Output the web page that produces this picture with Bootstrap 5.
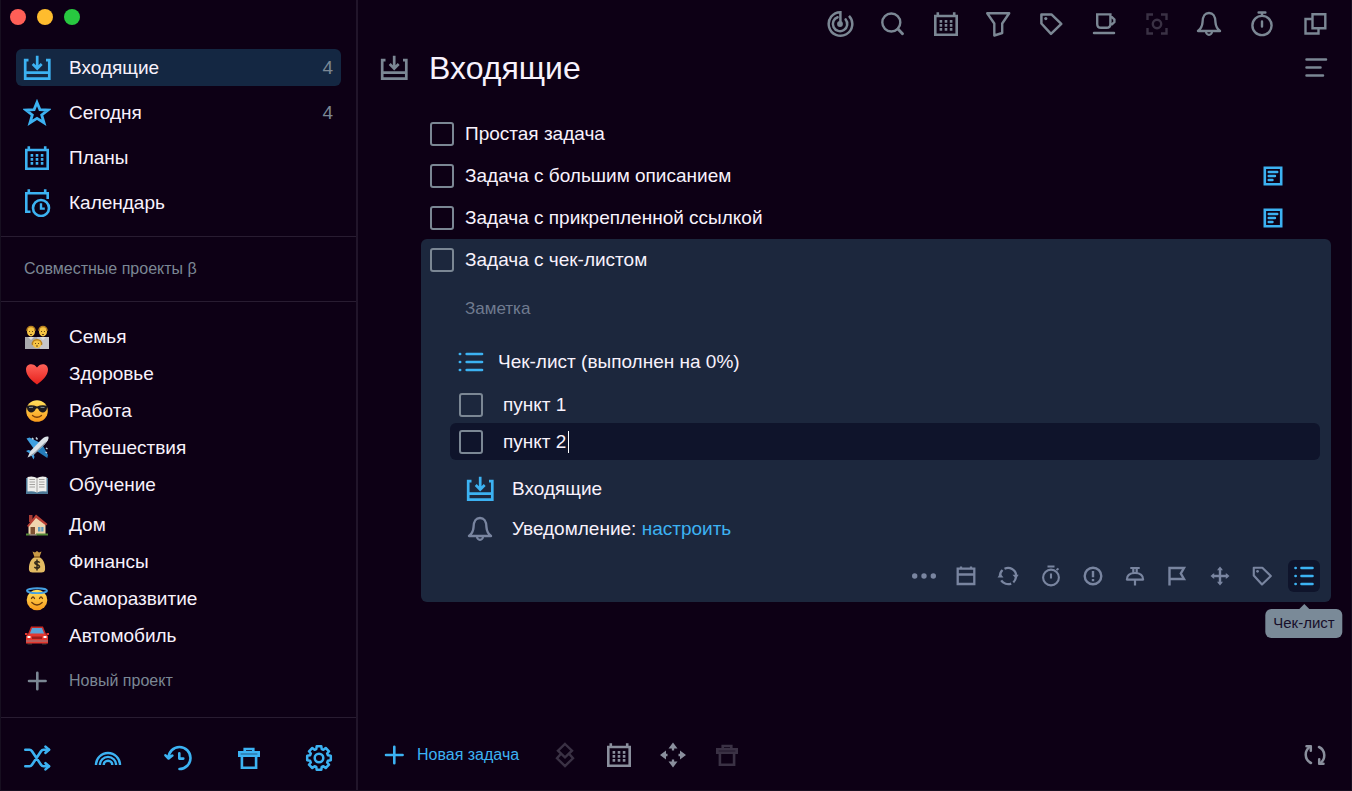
<!DOCTYPE html>
<html lang="ru" data-bs-theme="dark">
<head>
<meta charset="utf-8">
<meta name="viewport" content="width=device-width, initial-scale=1">
<title>Входящие</title>
<link href="https://cdn.jsdelivr.net/npm/bootstrap@5.3.0/dist/css/bootstrap.min.css" rel="stylesheet">
<script src="https://cdn.jsdelivr.net/npm/bootstrap@5.3.0/dist/js/bootstrap.bundle.min.js" defer></script>
<style>
  :root { --ink:#0d0015; --edge:#21152a; --blue:#3cb2f2; --gray:#7b8794; --dim:#3a3144; --pale:#f8f2fc; --panel:#1c273d; }
  body { background:var(--ink); color:var(--pale); font-family:"Liberation Sans",Arial,sans-serif; font-size:19px; line-height:24px; }
  .window { border:1px solid #170f20; border-top:0; }
  .bare { background:none; border:0; color:inherit; padding:0; display:flex; align-items:center; justify-content:center; }
  .sidebar { width:357px; border-right:2px solid var(--edge); }
  .sidebar section, .sidebar footer { border-top:1px solid #281c31; }
  .lights { height:49px; padding:9px 0 0 9px; gap:11px; }
  .light { width:16px; height:16px; border-radius:50%; }
  .ic { width:28px; height:28px; flex:none; fill:none; stroke:currentColor; stroke-width:2.4; display:block; }
  .ic-sm { width:24px; height:24px; }
  .views { gap:8px; padding:0 15px 15px; }
  .view, .project { height:37px; padding:0 8px 0 7px; gap:18px; color:var(--pale); text-decoration:none; border-radius:6px; }
  .view.active { background:#142742; }
  .view .ic { color:var(--blue); }
  .view .count { color:var(--gray); }
  .shared { height:64px; padding-left:23px; color:var(--gray); font-size:16px; text-decoration:none; }
  .projects { padding:16px 15px 18px; }
  .second-group { margin-top:3px; }
  .emoji { width:24px; height:24px; margin:0 2px; flex:none; }
  .new-project { height:37px; margin-top:8px; font-size:16px; color:var(--gray); padding:0 7px; gap:18px; }
  .side-tools { padding:26px 23px 18px 22px; color:var(--blue); }
  .top-tools { width:503px; max-width:100%; color:var(--gray); margin:10px 22px 0 auto; }
  .bare.faint { color:var(--dim); }
  .title-row { padding:10px 22px 0; gap:21px; color:var(--gray); height:50px; }
  .title-row h1 { font-size:32px; line-height:40px; font-weight:400; color:var(--pale); }
  .tasks { padding:25px 20px 0 63px; }
  .task { height:42px; padding:0 9px; gap:11px; }
  .tick { appearance:none; width:24px; height:24px; border:2px solid var(--gray); border-radius:3px; background:transparent; flex:none; margin:0; }
  .note-mark { width:20px; height:20px; margin-right:39px; color:var(--blue); }
  .open-task { background:var(--panel); border-radius:6px; }
  .line-input { background:none; border:0; padding:0; color:inherit; outline:0; min-width:0; height:28px; }
  .note-box { height:56px; padding-left:44px; }
  .note-box input { font-size:17px; width:100%; }
  .note-box input::placeholder { color:#707b90; opacity:1; }
  .check-head { height:49px; padding-left:36px; gap:13px; }
  .point { height:37px; margin:0 11px 0 29px; padding-left:9px; border-radius:6px; }
  .point.now { background:#0f142b; }
  .point .line-input { margin-left:20px; width:64px; }
  .caret { width:1px; height:22px; background:#fff; margin-left:1px; }
  .meta { padding:9px 0 11px 45px; }
  .meta-row { height:40px; gap:18px; }
  .sky { color:var(--blue); text-decoration:none; }
  .slate { color:#7985a0; }
  .task-tools { width:412px; max-width:100%; margin:0 11px 0 auto; padding-bottom:10px; }
  .task-tools .bare { width:32px; height:32px; border-radius:6px; }
  .task-tools .on { background:#0f142b; color:var(--blue); }
  .tip { position:absolute; top:49px; left:50%; transform:translateX(-50%); height:29px; padding:0 8px; border-radius:6px; background:#7a8a98; color:#170f2a; font-size:15px; line-height:28px; white-space:nowrap; }
  .tip::before { content:""; position:absolute; bottom:100%; left:50%; margin-left:-5px; border:5px solid transparent; border-top:0; border-bottom-color:#7a8a98; }
  .bottom { padding:0 22px 21px; gap:26px; color:#8a8f9d; }
  .add { color:var(--blue); font-size:16px; gap:9px; margin-right:6px; }
</style>
</head>
<body>
<svg class="d-none" aria-hidden="true">
  <symbol id="inbox" viewBox="0 0 28 28"><path d="M5.5 6.2H2.2V24.6H26.3V6.2H23M2 18.6H26.5" stroke-width="2.7"/><path d="M14.2 1.7V14M9.7 10L14.2 14.5 18.7 10" stroke-width="2.7"/></symbol>
  <symbol id="star" viewBox="0 0 28 28"><path stroke-width="2.8" d="M14 3.4L16.9 10.6 25 11 18.7 16 21 23.800 14 19.300 7 23.800 9.300 16 3 11 11.100 10.600Z"/></symbol>
  <symbol id="cal" viewBox="0 0 28 28"><path stroke-width="2.600" d="M3.300 6H24.700V24.700H3.300ZM5.800 2.300V6M22.200 2.300V6"/><path stroke-width="2.600" stroke-dasharray="2.600 2.500" d="M7.600 11.400H20.400M7.600 15.400H20.400M7.600 19.400H20.400"/></symbol>
  <symbol id="calclock" viewBox="0 0 28 28"><path stroke-width="2.600" d="M7.500 22.800H3.300V4.200H24.700V10M5.800 .3V4M22.200 .3V4"/><circle cx="18" cy="19" r="8" stroke-width="2.600"/><path d="M18 14.200V19.600H21.800"/></symbol>
  <symbol id="plus" viewBox="0 0 28 28"><path stroke-width="2.600" stroke-linecap="round" d="M14.300 5.700V22.300M6 14H22.600"/></symbol>
  <symbol id="shuffle" viewBox="0 0 28 28"><g stroke-width="2.600" stroke-linecap="round" stroke-linejoin="round"><path d="M2.300 5.700H6.500Q8 5.700 9 7.200L18 20.800Q19 22.300 20.500 22.300H26M2.300 22.300H6.500Q8 22.300 9 20.800L18 7.200Q19 5.700 20.500 5.700H26"/><path d="M22.500 2.600L26 5.700 22.500 8.800M22.500 19.200L26 22.300 22.500 25.400"/></g></symbol>
  <symbol id="rainbow" viewBox="0 0 28 28"><path d="M2 21A12 12 0 0 1 26 21M5.900 21A8.100 8.100 0 0 1 22.100 21M9.700 21A4.300 4.300 0 0 1 18.300 21"/></symbol>
  <symbol id="history" viewBox="0 0 28 28"><g stroke-width="2.600" stroke-linecap="round" stroke-linejoin="round"><path d="M4.500 14A11 11 0 1 1 15.500 25M1.500 11.300L4.600 14.500 8.300 11.600M15.300 9.300V14.600H19.300"/></g></symbol>
  <symbol id="trash" viewBox="0 0 28 28"><path stroke-width="2.600" d="M4.300 8.400H23.700V11.600H4.300ZM9.700 8.400V5H18.300V8.400M6.900 12.500V23.700H21.100V12.500"/></symbol>
  <symbol id="gear" viewBox="0 0 28 28"><path transform="translate(14 14)" stroke-width="2.500" stroke-linejoin="round" d="M-2.700-8.900L-2.300-11.800H2.300L2.700-8.900 4.400-8.200 6.700-10 10-6.700 8.200-4.400 8.900-2.700 11.800-2.300V2.300L8.900 2.700 8.200 4.400 10 6.700 6.700 10 4.400 8.200 2.700 8.900 2.300 11.800H-2.300L-2.700 8.900-4.400 8.200-6.700 10-10 6.700-8.200 4.400-8.900 2.700-11.800 2.300V-2.300L-8.900-2.700-8.200-4.400-10-6.700-6.700-10-4.400-8.200Z"/><circle cx="14" cy="14" r="4.300" stroke-width="2.500"/></symbol>
  <symbol id="radar" viewBox="0 0 28 28"><g stroke-width="2.500"><path d="M14.400 14V2.200A11.800 11.800 0 1 0 23 5.800"/><path d="M11.600 7.200A7.200 7.200 0 1 0 19.600 9.400" stroke-linecap="round"/></g><circle cx="14" cy="14" r="2.900" fill="currentColor" stroke="none"/></symbol>
  <symbol id="find" viewBox="0 0 28 28"><circle cx="12.300" cy="12.500" r="9" stroke-width="2.400"/><path d="M19 19L23.500 23.700" stroke-width="2.900" stroke-linecap="round"/></symbol>
  <symbol id="funnel" viewBox="0 0 28 28"><path stroke-width="2.400" stroke-linejoin="round" d="M3.200 3.300H25.200L18.200 13.500V23L10.300 25.500V13.500Z"/></symbol>
  <symbol id="tag" viewBox="0 0 28 28"><path stroke-width="2.500" stroke-linejoin="round" d="M4.400 4.400H14.400L24.300 13.900 14 23.800 4.400 13.500Z"/><circle cx="8.800" cy="8.600" r="1.600" fill="currentColor" stroke="none"/></symbol>
  <symbol id="cup" viewBox="0 0 28 28"><path stroke-width="2.400" d="M7.200 4.400H20.400V14Q20.400 17.800 16.600 17.800H11Q7.200 17.800 7.200 14ZM20.400 7.200H22L24.400 9.500V12L22 14.300H20.400"/><path d="M4 23H24" stroke-width="2.500" stroke-linecap="round"/></symbol>
  <symbol id="focus" viewBox="0 0 28 28"><path stroke-width="2.400" d="M4.500 10V4.500H10M18 4.500H23.500V10M23.500 18V23.500H18M10 23.500H4.500V18"/><circle cx="14" cy="14" r="4.200" stroke-width="2.400"/></symbol>
  <symbol id="bell" viewBox="0 0 28 28"><path stroke-width="2.400" stroke-linejoin="round" d="M3 21H25C22 18.600 20.800 17 20.500 12.500C20.200 6 18.800 3 14 3S7.800 6 7.500 12.500C7.200 17 6 18.600 3 21Z"/><path stroke-width="2.200" d="M11 21.500A3 3.300 0 0 0 17 21.500"/></symbol>
  <symbol id="timer" viewBox="0 0 28 28"><circle cx="14" cy="15.500" r="9.600" stroke-width="2.400"/><path stroke-linecap="round" stroke-width="2.400" d="M10.600 2.500H17.400M14 2.500V5.500M14 11.500V16.500"/></symbol>
  <symbol id="timer-s" viewBox="0 0 28 28"><circle cx="14" cy="15.500" r="7.900" stroke-width="2.100"/><path stroke-width="2.100" d="M10.500 4.500H17.500M14 11.500V16.500M19.500 8L21.500 6.500"/></symbol>
  <symbol id="copies" viewBox="0 0 28 28"><path stroke-width="2.400" d="M11.500 4.300H24.300V18.300H11.500ZM11 9H4.500V23.500H17.500V18.500"/></symbol>
  <symbol id="lines" viewBox="0 0 28 28"><path stroke-width="2.500" stroke-linecap="round" d="M5.500 5.500H25M5.500 13.500H19.500M5.500 21.500H22"/></symbol>
  <symbol id="note" viewBox="0 0 20 20"><path stroke-width="2.600" d="M1.800 1.800H18.200V18.200H1.800Z"/><path stroke-width="2.400" stroke-linecap="round" d="M5.700 6H14.300M5.700 10H12M5.700 14H9.500"/></symbol>
  <symbol id="checks" viewBox="0 0 28 28"><path stroke-width="2.700" stroke-linecap="round" d="M9.700 6H25M9.700 14H25M9.700 22H25M2.900 6H3.100M2.900 14H3.100M2.900 22H3.100"/></symbol>
  <symbol id="checks-s" viewBox="0 0 28 28"><path stroke-width="2.600" stroke-linecap="round" d="M11.500 6H22.500M11.500 14H22.500M11.500 22H22.500M5.500 6H5.700M5.500 14H5.700M5.500 22H5.700"/></symbol>
  <symbol id="more" viewBox="0 0 28 28"><g fill="currentColor" stroke="none"><circle cx="4.700" cy="14" r="2.700"/><circle cx="14" cy="14" r="2.700"/><circle cx="23.300" cy="14" r="2.700"/></g></symbol>
  <symbol id="date" viewBox="0 0 28 28"><path stroke-width="2.300" d="M5.700 6.700H22.300V22H5.700ZM5.700 12.500H22.300M9 4.500V7M19 4.500V7"/></symbol>
  <symbol id="repeat" viewBox="0 0 28 28"><path stroke-width="2.300" d="M6 14.500A8.200 8.200 0 0 1 8.500 8M10.500 6.700A8.200 8.200 0 0 1 22.200 13.500M22 15A8.200 8.200 0 0 1 19.300 20.300M17.200 21.600A8.200 8.200 0 0 1 7.200 18.300"/><path fill="currentColor" stroke="none" d="M3.500 15.500L6.300 11.500 9.500 15.500ZM18.500 12.800L22 16.800 24.700 12.800Z"/></symbol>
  <symbol id="alert" viewBox="0 0 28 28"><circle cx="14" cy="14" r="8.300"/><path stroke-width="2.400" d="M14 9V15.300M14 17V19.300"/></symbol>
  <symbol id="pin" viewBox="0 0 28 28"><path stroke-width="2.200" d="M9.300 6H18.700M12.300 6V10.500M15.700 6V10.500M5.900 17.600C5.900 13 9.500 11 14 11S22.100 13 22.100 17.600ZM14 18V23.500" stroke-linejoin="round"/></symbol>
  <symbol id="flag" viewBox="0 0 28 28"><path d="M6.500 23.500V6H21L17.800 11.500 21 17H6.500"/></symbol>
  <symbol id="move" viewBox="0 0 28 28"><path d="M14 6V22M6 14H22"/><path fill="currentColor" stroke="none" d="M14 4.500L17 8.200H11ZM14 23.500L17 19.800H11ZM4.500 14L8.200 11V17ZM23.500 14L19.800 11V17Z"/></symbol>
  <symbol id="stack" viewBox="0 0 28 28"><path stroke-width="2.400" d="M14 3L21 9.700 14 16.400 7 9.700ZM9.300 13.500L6 17.300 14 25 22 17.300 18.700 13.500"/></symbol>
  <symbol id="move4" viewBox="0 0 28 28"><path stroke-width="2.300" d="M14 6V9.500M14 18.500V22M4 14H8.500M19.500 14H24"/><path fill="currentColor" stroke="none" d="M14 1.500L18.500 7.500H9.500ZM14 26.500L18.500 20.500H9.500ZM1 14L7 9.500V18.500ZM27 14L21 9.500V18.500Z"/></symbol>
  <symbol id="sync" viewBox="0 0 28 28"><g stroke-width="2.500" stroke-linecap="round" stroke-linejoin="round"><path d="M10 22A9.300 9.300 0 0 1 9.500 5.500M18 6A9.300 9.300 0 0 1 18.500 22.500"/><path d="M5.500 5.200L9.800 5.200V9.700M22.500 22.800L18.200 22.800V18.300"/></g></symbol>
</svg>

<div class="window d-flex min-vh-100">
  <aside class="sidebar d-flex flex-column flex-shrink-0">
    <div class="lights d-flex">
      <span class="light" style="background:#ff5f57"></span><span class="light" style="background:#febc2e"></span><span class="light" style="background:#28c840"></span>
    </div>
    <nav class="views d-flex flex-column">
      <a href="#" class="view active d-flex align-items-center"><svg class="ic"><use href="#inbox"/></svg>Входящие<span class="count ms-auto">4</span></a>
      <a href="#" class="view d-flex align-items-center"><svg class="ic"><use href="#star"/></svg>Сегодня<span class="count ms-auto">4</span></a>
      <a href="#" class="view d-flex align-items-center"><svg class="ic"><use href="#cal"/></svg>Планы</a>
      <a href="#" class="view d-flex align-items-center"><svg class="ic"><use href="#calclock"/></svg>Календарь</a>
    </nav>
    <section><a href="#" class="shared d-flex align-items-center">Совместные проекты β</a></section>
    <section class="projects flex-grow-1">
      <a href="#" class="project d-flex align-items-center"><svg class="emoji" viewBox="0 0 24 24"><path fill="#a9a9ad" d="M0 12H24V24H0Z"/><path fill="#c6c6ca" d="M12 12H24V24H15Z"/><path fill="#dededf" d="M3 12L6 15 9 12ZM15 12L18 15 21 12Z"/><g fill="#f5c344"><ellipse cx="6" cy="6.500" rx="4" ry="5"/><ellipse cx="18" cy="6.500" rx="4" ry="5"/><circle cx="12" cy="18.500" r="4.500"/></g><g fill="none" stroke="#b8801f" stroke-width="1.300"><path d="M2 6C1 0 11 0 10 6M14 6C13 0 23 0 22 6M7.500 20C6 13 18 13 16.500 20"/></g><path stroke="#5b3a10" stroke-width=".9" d="M4.500 6V7M7.500 6V7M16.500 6V7M19.500 6V7M10.500 18V19M13.500 18V19M5 9.500H7M17 9.500H19M11 21H13"/></svg><span>Семья</span></a>
      <a href="#" class="project d-flex align-items-center"><svg class="emoji" viewBox="0 0 24 24"><defs><linearGradient id="hr" x2="0" y2="1"><stop stop-color="#ff6259"/><stop offset="1" stop-color="#e5201b"/></linearGradient></defs><path fill="url(#hr)" d="M12 22.500C7 19 1 13.500 1 7.500C1 1 9 .5 12 5.500C15 .5 23 1 23 7.500C23 13.500 17 19 12 22.500Z"/></svg><span>Здоровье</span></a>
      <a href="#" class="project d-flex align-items-center"><svg class="emoji" viewBox="0 0 24 24"><defs><linearGradient id="fc" x2="0" y2="1"><stop stop-color="#ffe05c"/><stop offset="1" stop-color="#f99a1b"/></linearGradient></defs><circle cx="12" cy="12" r="10.800" fill="url(#fc)"/><path fill="#1b1a1e" d="M1.500 7Q7 5.500 12 7.500 17 5.500 22.500 7L22 9C21.500 14.500 15 15 13.300 10Q12 8.500 10.700 10C9 15 2.500 14.500 2 9Z"/><path fill="none" stroke="#7b3f0a" stroke-width="1.300" stroke-linecap="round" d="M7.500 16.500Q12 20 16.500 16.500"/><path stroke="#7f8c92" d="M4 8.500L8 8.300M15.500 8.300L19.500 8.500"/></svg><span>Работа</span></a>
      <a href="#" class="project d-flex align-items-center"><svg class="emoji" viewBox="0 0 24 24"><path fill="#3f9fe0" d="M1.500 2.500L4.500 1.500 16.500 7.500 9 13Z"/><path fill="#257cba" d="M22.300 22L23 19 17 8 11 14.500Z"/><path fill="#3f9fe0" d="M1 15L3.500 14 8 15.500 9.500 21 8.500 23.500 5.500 18Z"/><path fill="#dbe1e7" d="M23.500.8C21 0 18 2 16 4L5.500 15 2.500 21.500 9 18.500 20 8C22.500 5.500 24 3 23.500.8Z"/><path fill="#8c9ba8" d="M20 8L9 18.500 2.500 21.500 10 16 21 5.500Z"/><path stroke="#c4d3de" stroke-width="1.500" d="M7 2L8.500 3.500M11 1.500L12.500 3.500M21 12L22.500 13M20.500 16L22 17"/></svg><span>Путешествия</span></a>
      <a href="#" class="project d-flex align-items-center"><svg class="emoji" viewBox="0 0 24 24"><path fill="#4c7896" d="M1 5H23V21H1Z"/><path fill="#efefec" d="M2.500 4Q8 2.500 12 5 16 2.500 21.500 4V18.500Q16 17.500 12 19.500 8 17.500 2.500 18.500Z"/><path fill="none" stroke="#9b9a97" stroke-width=".9" d="M12 5V19.500M4.500 6.500H10M4.500 9H10M4.500 11.500H10M4.500 14H10M14 6.500H19.500M14 9H19.500M14 11.500H19.500M14 14H19.500"/></svg><span>Обучение</span></a>
      <div class="second-group">
      <a href="#" class="project d-flex align-items-center"><svg class="emoji" viewBox="0 0 24 24"><path fill="#a73c35" d="M4 2H7.500V9H4Z"/><path fill="#f0d5ae" d="M3.500 12L11 4 20.500 11V21.500H3.500Z"/><path fill="#b94035" d="M2 13L11 1.500 22.500 11 21 12.500 11 5 3.500 14Z"/><path fill="#7d5133" d="M5.500 14H10V21.500H5.500Z"/><path fill="#5f9cbf" d="M13 14H18.500V18.500H13Z"/><path stroke="#f0d5ae" stroke-width=".8" d="M15.800 14V18.500"/><path fill="#568c39" d="M1 20.500H4.500V22.500H1ZM11 20.500H23V22.500H11Z"/><path fill="#aca196" d="M4.500 21.500H11.500V22.500H4.500Z"/></svg><span>Дом</span></a>
      <a href="#" class="project d-flex align-items-center"><svg class="emoji" viewBox="0 0 24 24"><path fill="#c99a46" d="M7.500 1.500L10 2.500 12 1 14 2.500 16.500 1.500 14.500 7H9.500Z"/><path fill="#e3bb63" d="M9.500 7H14.500C19 10 20.500 15 20 20Q19.500 22.500 16.500 22.500H7.500Q4.500 22.500 4 20C3.500 15 5 10 9.500 7Z"/><path stroke="#8b5f20" stroke-width="1.500" d="M9 7H15"/><path fill="none" stroke="#31281a" stroke-width="1.500" d="M14.800 12.500Q12 10.500 10 12.200C8.700 14.500 15 14.500 14.500 17Q12.500 19.500 9.300 17.200M12 9.500V20.500"/></svg><span>Финансы</span></a>
      <a href="#" class="project d-flex align-items-center"><svg class="emoji" viewBox="0 0 24 24"><circle cx="12" cy="13" r="10.300" fill="url(#fc)"/><ellipse cx="12" cy="3.700" rx="10" ry="2.400" fill="none" stroke="#45a0e2" stroke-width="1.900"/><path fill="none" stroke="#6b3a0c" stroke-width="1.300" stroke-linecap="round" d="M6.500 11.500Q8 8.500 9.500 11.500M14.500 11.500Q16 8.500 17.500 11.500M6.800 15.500Q12 20.500 17.200 15.500"/></svg><span>Саморазвитие</span></a>
      <a href="#" class="project d-flex align-items-center"><svg class="emoji" viewBox="0 0 24 24"><path fill="#262329" d="M2.500 16H7V21H2.500ZM17 16H21.500V21H17Z"/><path fill="#c92824" d="M6 2.500H18L21 10H3Z"/><path fill="#5ca4d8" d="M7 4H17L19.300 10H4.700Z"/><path fill="#e33830" d="M1 12L4 9.500H20L23 12V19.500H1Z"/><path fill="#9c1d1b" d="M7 12.500H17V15H7Z"/><path fill="#fff" d="M2.500 12H5.500V14H2.500ZM18.500 12H21.500V14H18.500Z"/><path fill="#8d8489" d="M1 16.500H23V17.500H1Z"/><path fill="#e33830" d="M0 9H2.500V11H0ZM21.500 9H24V11H21.500Z"/></svg><span>Автомобиль</span></a>
      </div>
      <button type="button" class="bare new-project"><svg class="ic"><use href="#plus"/></svg>Новый проект</button>
    </section>
    <footer class="side-tools d-flex justify-content-between">
      <button type="button" class="bare" aria-label="Перемешать"><svg class="ic"><use href="#shuffle"/></svg></button>
      <button type="button" class="bare" aria-label="Радуга"><svg class="ic"><use href="#rainbow"/></svg></button>
      <button type="button" class="bare" aria-label="История"><svg class="ic"><use href="#history"/></svg></button>
      <button type="button" class="bare" aria-label="Корзина"><svg class="ic"><use href="#trash"/></svg></button>
      <button type="button" class="bare" aria-label="Настройки"><svg class="ic"><use href="#gear"/></svg></button>
    </footer>
  </aside>

  <main class="d-flex flex-column flex-grow-1">
    <div class="top-tools d-flex justify-content-between">
      <button type="button" class="bare" aria-label="Радар"><svg class="ic"><use href="#radar"/></svg></button>
      <button type="button" class="bare" aria-label="Поиск"><svg class="ic"><use href="#find"/></svg></button>
      <button type="button" class="bare" aria-label="Планы"><svg class="ic"><use href="#cal"/></svg></button>
      <button type="button" class="bare" aria-label="Фильтр"><svg class="ic"><use href="#funnel"/></svg></button>
      <button type="button" class="bare" aria-label="Метки"><svg class="ic"><use href="#tag"/></svg></button>
      <button type="button" class="bare" aria-label="Перерыв"><svg class="ic"><use href="#cup"/></svg></button>
      <button type="button" class="bare faint" aria-label="Фокус"><svg class="ic"><use href="#focus"/></svg></button>
      <button type="button" class="bare" aria-label="Уведомления"><svg class="ic"><use href="#bell"/></svg></button>
      <button type="button" class="bare" aria-label="Таймер"><svg class="ic"><use href="#timer"/></svg></button>
      <button type="button" class="bare" aria-label="Окна"><svg class="ic"><use href="#copies"/></svg></button>
    </div>
    <header class="title-row d-flex align-items-center">
      <svg class="ic"><use href="#inbox"/></svg>
      <h1 class="m-0">Входящие</h1>
      <button type="button" class="bare ms-auto" aria-label="Вид"><svg class="ic"><use href="#lines"/></svg></button>
    </header>
    <div class="tasks">
      <div class="task d-flex align-items-center"><input type="checkbox" class="tick" id="t1"><label for="t1">Простая задача</label></div>
      <div class="task d-flex align-items-center"><input type="checkbox" class="tick" id="t2"><label for="t2">Задача с большим описанием</label><svg class="ic note-mark ms-auto"><use href="#note"/></svg></div>
      <div class="task d-flex align-items-center"><input type="checkbox" class="tick" id="t3"><label for="t3">Задача с прикрепленной ссылкой</label><svg class="ic note-mark ms-auto"><use href="#note"/></svg></div>
      <div class="open-task">
        <div class="task d-flex align-items-center"><input type="checkbox" class="tick" id="t4"><label for="t4">Задача с чек-листом</label></div>
        <div class="note-box d-flex align-items-center"><input type="text" class="line-input" placeholder="Заметка" aria-label="Заметка"></div>
        <div class="check-head d-flex align-items-center"><svg class="ic sky"><use href="#checks"/></svg><span>Чек-лист (выполнен на 0%)</span></div>
        <div class="point d-flex align-items-center"><input type="checkbox" class="tick" aria-label="пункт 1"><input type="text" class="line-input" value="пункт 1" aria-label="Название пункта 1"></div>
        <div class="point now d-flex align-items-center"><input type="checkbox" class="tick" aria-label="пункт 2"><input type="text" class="line-input" value="пункт 2" aria-label="Название пункта 2"><span class="caret"></span></div>
        <div class="meta">
          <div class="meta-row d-flex align-items-center"><svg class="ic sky"><use href="#inbox"/></svg><span>Входящие</span></div>
          <div class="meta-row d-flex align-items-center"><svg class="ic slate"><use href="#bell"/></svg><span>Уведомление: <a href="#" class="sky">настроить</a></span></div>
        </div>
        <div class="task-tools slate d-flex justify-content-between">
          <button type="button" class="bare" aria-label="Ещё"><svg class="ic"><use href="#more"/></svg></button>
          <button type="button" class="bare" aria-label="Дата"><svg class="ic"><use href="#date"/></svg></button>
          <button type="button" class="bare" aria-label="Повтор"><svg class="ic"><use href="#repeat"/></svg></button>
          <button type="button" class="bare" aria-label="Таймер"><svg class="ic"><use href="#timer-s"/></svg></button>
          <button type="button" class="bare" aria-label="Важность"><svg class="ic"><use href="#alert"/></svg></button>
          <button type="button" class="bare" aria-label="Закрепить"><svg class="ic"><use href="#pin"/></svg></button>
          <button type="button" class="bare" aria-label="Флаг"><svg class="ic"><use href="#flag"/></svg></button>
          <button type="button" class="bare" aria-label="Переместить"><svg class="ic"><use href="#move"/></svg></button>
          <button type="button" class="bare" aria-label="Метка"><svg class="ic ic-sm"><use href="#tag"/></svg></button>
          <button type="button" class="bare on position-relative" aria-label="Чек-лист"><svg class="ic"><use href="#checks-s"/></svg><span class="tip">Чек-лист</span></button>
        </div>
      </div>
    </div>
    <div class="bottom d-flex align-items-center mt-auto">
      <button type="button" class="bare add"><svg class="ic"><use href="#plus"/></svg>Новая задача</button>
      <button type="button" class="bare faint" aria-label="Слои"><svg class="ic"><use href="#stack"/></svg></button>
      <button type="button" class="bare" aria-label="Дата"><svg class="ic"><use href="#cal"/></svg></button>
      <button type="button" class="bare" aria-label="Переместить"><svg class="ic"><use href="#move4"/></svg></button>
      <button type="button" class="bare faint" aria-label="Удалить"><svg class="ic"><use href="#trash"/></svg></button>
      <button type="button" class="bare ms-auto" aria-label="Синхронизация"><svg class="ic"><use href="#sync"/></svg></button>
    </div>
  </main>
</div>
</body>
</html>
